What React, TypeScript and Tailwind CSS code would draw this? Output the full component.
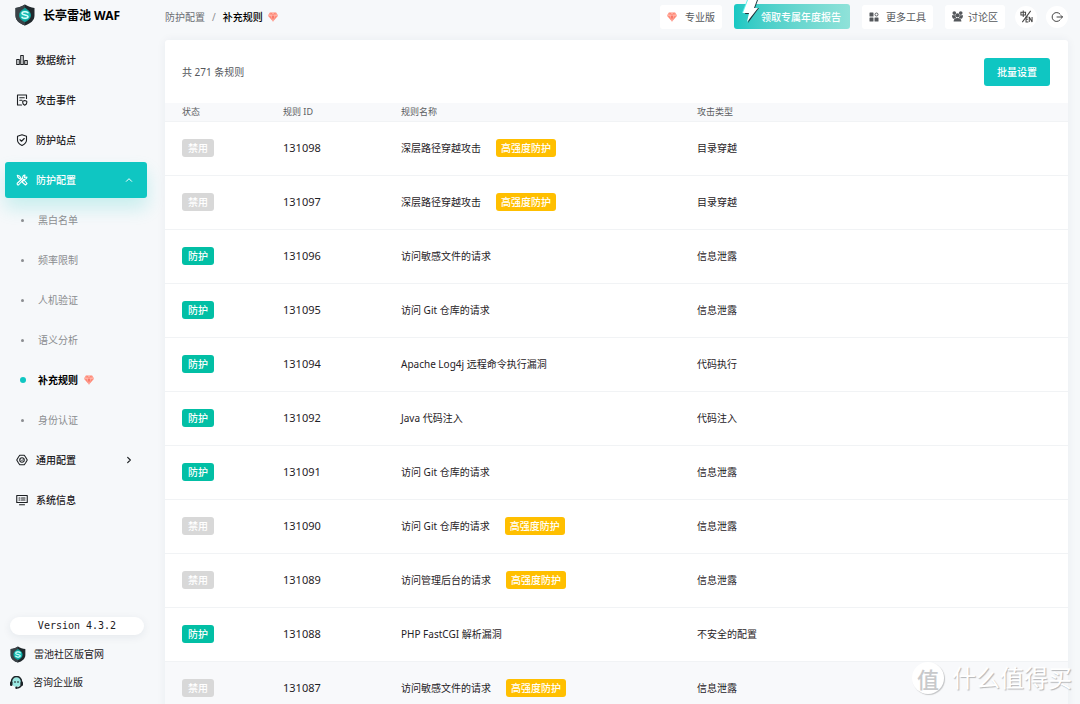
import React from "react";

type IconProps = { className?: string };

function ShieldLogo({ className }: IconProps) {
  return (
    <svg viewBox="0 0 40 44" className={className} aria-hidden="true">
      <path d="M20 1C14 5 8 7 1 8v15c0 10 8 16 19 20 11-4 19-10 19-20V8C32 7 26 5 20 1z" fill="#20282c" />
      <path d="M20 1v42C9 39 1 33 1 23V8c7-1 13-3 19-7z" fill="#3a4247" />
      <path d="M20 7c-1 3-11 5-12 15 0 7 5 11 12 14 7-3 12-7 12-14C31 12 21 10 20 7z" fill="#0f9f99" />
      <circle cx="20" cy="22" r="10" fill="#18bdb5" />
      <path
        d="M26 17.500c-3-3.500-12-2.500-12 1 0 4.500 12 2.500 12 7 0 3.500-9 4.500-12 1"
        fill="none"
        stroke="#d8fffb"
        strokeWidth="3"
        strokeLinecap="round"
      />
    </svg>
  );
}

function Diamond({ className }: IconProps) {
  return (
    <svg viewBox="0 0 20 20" className={className} aria-hidden="true">
      <path d="M4 1h12l4 6.500L10 19 0 7.500z" fill="#ff8673" />
      <path d="M4 1 6.500 7.500H0zM16 1l-2.500 6.500H20z" fill="#ffa596" />
      <path d="M6.500 7.500h7L10 19z" fill="#f76c5c" />
      <path d="M0 7.500h20M6.500 7.500 10 1l3.500 6.500L10 19z" fill="none" stroke="#ffd3cb" strokeWidth="1" />
    </svg>
  );
}

function StrokeIcon({ className, children }: { className?: string; children: React.ReactNode }) {
  return (
    <svg
      viewBox="0 0 24 24"
      className={className}
      fill="none"
      stroke="currentColor"
      strokeWidth="2.200"
      strokeLinecap="round"
      strokeLinejoin="round"
      aria-hidden="true"
    >
      {children}
    </svg>
  );
}

const navIcon = "size-3 shrink-0";

const ChartIcon = () => (
  <StrokeIcon className={navIcon}>
    <path d="M1.500 11h5v10h-5zM9.500 3h5v18h-5zM17.500 13h5v8h-5z" />
  </StrokeIcon>
);

const EventIcon = () => (
  <StrokeIcon className={navIcon}>
    <path d="M21 9V2H3v20h8M7.500 7.500h9M7.500 12.500H12" />
    <path d="M13.500 14.500l4-1.500 4 1.500v3c0 2.500-2 4-4 5-2-1-4-2.500-4-5z" />
  </StrokeIcon>
);

const SiteIcon = () => (
  <StrokeIcon className={navIcon}>
    <path d="M12 1.500 21 4.500v8c0 5-4 8-9 10.500-5-2.500-9-5.500-9-10.500v-8z" />
    <path d="m8 11.500 3 3 5.500-5.500" />
  </StrokeIcon>
);

const ToolsIcon = () => (
  <StrokeIcon className={navIcon}>
    <path d="M2.500 2.500 7 4l3.500 5M2.500 2.500 4 7l5 3.500M14 14l2-2 6 7-3 3-7-6z" />
    <path d="M22 6a5 5 0 0 1-6.500 4.500L5.500 21.500a2.200 2.200 0 0 1-3-3L13.500 8.500A5 5 0 0 1 18 2l-1 5z" />
  </StrokeIcon>
);

const SettingIcon = () => (
  <StrokeIcon className={navIcon}>
    <path d="M7.500 2.500h9L19 6l3.500 6-3.500 6-2.500 3.500h-9L5 18l-3.500-6L5 6z" />
    <circle cx="12" cy="12" r="4.500" />
    <path d="m10.500 12 1.500 1.500 2-2.500" strokeWidth="1.500" />
  </StrokeIcon>
);

const MonitorIcon = () => (
  <StrokeIcon className={navIcon}>
    <path d="M1.500 3h21v14h-21zM7 21.500h10" />
    <path d="M6 8h2M6 12h2M11 8h7M11 12h7" />
  </StrokeIcon>
);

const GridIcon = () => (
  <svg viewBox="0 0 20 20" className="size-[10px]" fill="currentColor" aria-hidden="true">
    <rect x="1" y="1" width="8" height="8" rx="1" />
    <rect x="1" y="11" width="8" height="8" rx="1" />
    <rect x="11" y="11" width="8" height="8" rx="1" />
    <rect x="12" y="2" width="6" height="6" rx="3" fill="none" stroke="currentColor" strokeWidth="2" />
  </svg>
);

const GroupIcon = () => (
  <svg viewBox="0 0 24 24" className="size-[11px]" fill="currentColor" aria-hidden="true">
    <circle cx="5" cy="4.500" r="4" />
    <circle cx="19" cy="4.500" r="4" />
    <circle cx="12" cy="9.500" r="4.500" />
    <path d="M0 9h7l2 6-5 2c-3-1-4-4-4-8zM24 9h-7l-2 6 5 2c3-1 4-4 4-8z" />
    <path d="M3.500 23c0-5 3-7.500 8.500-7.500s8.500 2.500 8.500 7.500z" />
  </svg>
);

const LanguageIcon = () => (
  <svg viewBox="0 0 28 28" className="size-[13px]" aria-hidden="true">
    <g fill="none" stroke="#444" strokeWidth="2.200">
      <path d="M2 5h10v6H2zM7 1v14M23 2 5 26" />
      <path d="M18 15h-5v11h5M13 20h4M20 26V15l6 11V15" />
    </g>
  </svg>
);

const ExitIcon = () => (
  <StrokeIcon className="size-3">
    <path d="M18 6a9 9 0 1 0 0 12M12 12h11M20 9l3 3-3 3" strokeWidth="2" />
  </StrokeIcon>
);

const SupportIcon = () => (
  <svg viewBox="0 0 26 26" className="size-[13px]" aria-hidden="true">
    <circle cx="13" cy="12" r="10" fill="#9be8e2" />
    <path d="M3 14V11a10 10 0 0 1 20 0v5c0 4-3 7-8 8" fill="none" stroke="#1c2327" strokeWidth="3" />
    <rect x="0" y="11" width="5" height="9" rx="2.500" fill="#1c2327" />
    <rect x="21" y="11" width="5" height="9" rx="2.500" fill="#1c2327" />
    <path d="M10 10v4M16 10v4" stroke="#1c2327" strokeWidth="2" />
    <circle cx="13" cy="23.500" r="2.500" fill="#1c2327" />
  </svg>
);

const Bolt = () => (
  <svg viewBox="0 0 18 24" className="absolute -top-1 left-2 h-6 w-[18px]" aria-hidden="true">
    <path d="M7 0h9l-3 8h4L6 23l2-9H3z" fill="#20333a" />
    <path d="M5 0h2L2 13H0z" fill="#5ff3f0" />
    <path d="M6 0h9l-3 8h4L5 22l2-9H1z" fill="#fff" />
  </svg>
);

const subItems = ["黑白名单", "频率限制", "人机验证", "语义分析", "补充规则", "身份认证"];

type Rule = { id: string; name: string; type: string; on: boolean; strict?: boolean };

const rules: Rule[] = [
  { id: "131098", name: "深层路径穿越攻击", type: "目录穿越", on: false, strict: true },
  { id: "131097", name: "深层路径穿越攻击", type: "目录穿越", on: false, strict: true },
  { id: "131096", name: "访问敏感文件的请求", type: "信息泄露", on: true },
  { id: "131095", name: "访问 Git 仓库的请求", type: "信息泄露", on: true },
  { id: "131094", name: "Apache Log4j 远程命令执行漏洞", type: "代码执行", on: true },
  { id: "131092", name: "Java 代码注入", type: "代码注入", on: true },
  { id: "131091", name: "访问 Git 仓库的请求", type: "信息泄露", on: true },
  { id: "131090", name: "访问 Git 仓库的请求", type: "信息泄露", on: false, strict: true },
  { id: "131089", name: "访问管理后台的请求", type: "信息泄露", on: false, strict: true },
  { id: "131088", name: "PHP FastCGI 解析漏洞", type: "不安全的配置", on: true },
  { id: "131087", name: "访问敏感文件的请求", type: "信息泄露", on: false, strict: true },
];

function NavLink({ icon, label }: { icon: React.ReactNode; label: string }) {
  return (
    <a href="#" className="flex h-9 items-center gap-2 rounded-[3px] px-[11px]">
      {icon}
      {label}
    </a>
  );
}

function Sidebar() {
  return (
    <aside className="flex w-[152px] shrink-0 flex-col pl-[5px] pr-[5px] text-[#1d2023]">
      <div className="flex h-[42px] shrink-0 items-start gap-2 pl-[10px] pt-1 text-[12px] font-bold leading-6 text-black">
        <ShieldLogo className="h-[22px] w-5" />
        长亭雷池 WAF
      </div>
      <nav className="flex flex-col gap-1 font-medium">
        <NavLink icon={<ChartIcon />} label="数据统计" />
        <NavLink icon={<EventIcon />} label="攻击事件" />
        <NavLink icon={<SiteIcon />} label="防护站点" />
        <button
          type="button"
          aria-expanded="true"
          className="flex h-9 items-center gap-2 rounded-[3px] bg-[#0fc6c2] px-[11px] text-white shadow-[0_10px_18px_rgba(15,198,194,0.2)]"
        >
          <ToolsIcon />
          防护配置
          <StrokeIcon className="ml-auto mr-[3px] size-2">
            <path d="m4 16 8-8 8 8" strokeWidth="3" />
          </StrokeIcon>
        </button>
        {subItems.map((label) => {
          const current = label === "补充规则";
          return (
            <a
              key={label}
              href="#"
              className={
                current
                  ? "flex h-9 items-center pl-[15px] font-bold text-black"
                  : "flex h-9 items-center pl-[15px] font-normal text-[#8b8d90]"
              }
            >
              <span className="flex w-[18px] items-center">
                <span
                  className={
                    current ? "size-[6px] rounded-full bg-[#0fc6c2]" : "ml-px size-[3px] rounded-full bg-[#8b8d90]"
                  }
                />
              </span>
              {label}
              {current && <Diamond className="ml-[6px] size-[10px]" />}
            </a>
          );
        })}
        <button type="button" aria-expanded="false" className="flex h-9 items-center gap-2 px-[11px]">
          <SettingIcon />
          通用配置
          <StrokeIcon className="ml-auto mr-[3px] size-2">
            <path d="m8 4 8 8-8 8" strokeWidth="3.500" />
          </StrokeIcon>
        </button>
        <NavLink icon={<MonitorIcon />} label="系统信息" />
      </nav>
      <div className="mt-auto flex flex-col pb-2 pl-[5px] pr-[3px]">
        <p className="mb-[5px] h-[18px] rounded-full bg-white text-center font-['DejaVu_Sans_Mono',monospace] leading-[18px] shadow-[0_2px_8px_rgba(30,50,80,0.08)]">
          Version 4.3.2
        </p>
        <a href="#" className="flex h-7 items-center gap-2">
          <ShieldLogo className="h-[17px] w-4" />
          雷池社区版官网
        </a>
        <a href="#" className="flex h-7 items-center gap-[10px]">
          <SupportIcon />
          咨询企业版
        </a>
      </div>
    </aside>
  );
}

function Topbar() {
  const chip = "flex h-6 items-center rounded-[3px] bg-white px-[7px] text-[#55585c]";
  const round = "flex size-[22px] items-center justify-center rounded-full bg-white text-[#444]";
  return (
    <header className="flex h-10 shrink-0 items-start justify-between pt-1">
      <nav aria-label="breadcrumb" className="flex h-[26px] items-center">
        <a href="#" className="text-[#6b6e72]">防护配置</a>
        <span className="px-[7px] text-[#8b8d90]">/</span>
        <span className="font-medium text-black">补充规则</span>
        <Diamond className="ml-[5px] size-[10px]" />
      </nav>
      <div className="flex items-center gap-[10px]">
        <div className="flex items-center gap-3">
          <button type="button" className={chip}>
            <span className="mr-2"><Diamond className="size-[10px]" /></span>
            专业版
          </button>
          <button
            type="button"
            className="relative h-[25px] rounded-[3px] bg-linear-to-r from-[#15c8c3] to-[#8fe2d9] pl-[27px] pr-[9px] font-medium text-white"
          >
            <Bolt />
            领取专属年度报告
          </button>
          <button type="button" className={chip}>
            <span className="mr-[7px]"><GridIcon /></span>
            更多工具
          </button>
          <button type="button" className={chip}>
            <span className="mr-[5px]"><GroupIcon /></span>
            讨论区
          </button>
        </div>
        <div className="flex gap-[9px]">
          <button type="button" aria-label="语言" className={round}><LanguageIcon /></button>
          <button type="button" aria-label="退出" className={round}><ExitIcon /></button>
        </div>
      </div>
    </header>
  );
}

function RuleTable() {
  const head = "h-[18px] px-[17px] text-left text-[9px] font-normal leading-none text-[#5c5f63]";
  return (
    <table className="w-full table-fixed border-collapse">
      <colgroup>
        <col className="w-[101px]" />
        <col className="w-[118px]" />
        <col className="w-[296px]" />
        <col />
      </colgroup>
      <thead className="bg-[#f8f9fb]">
        <tr className="border-b border-[#f1f3f5]">
          <th className={head}>状态</th>
          <th className={head}>规则 ID</th>
          <th className={head}>规则名称</th>
          <th className={head}>攻击类型</th>
        </tr>
      </thead>
      <tbody>
        {rules.map((r) => (
          <tr key={r.id} className="h-[54px] border-b border-[#f1f3f5] last:bg-[#f8f9fb]">
            <td className="px-[17px]">
              <span
                className={
                  r.on
                    ? "block h-[18px] w-8 rounded-[3px] bg-[#02bfa5] text-center font-medium leading-[18px] text-white"
                    : "block h-[18px] w-8 rounded-[3px] bg-[#d8d8d8] text-center font-medium leading-[18px] text-white"
                }
              >
                {r.on ? "防护" : "禁用"}
              </span>
            </td>
            <td className="px-[17px] text-[11px]">{r.id}</td>
            <td className="px-[17px]">
              <div className="flex items-center gap-[15px]">
                {r.name}
                {r.strict && (
                  <span className="h-[18px] rounded-[3px] bg-[#ffbf00] px-[5px] font-medium leading-[18px] text-white">
                    高强度防护
                  </span>
                )}
              </div>
            </td>
            <td className="px-[17px]">{r.type}</td>
          </tr>
        ))}
      </tbody>
    </table>
  );
}

export default function App() {
  return (
    <div className="relative flex h-screen overflow-hidden bg-[#f6f8fa] font-['Noto_Sans','Noto_Sans_CJK_SC',sans-serif] text-[10px] leading-4 text-[#1f2226]">
      <Sidebar />
      <main className="flex min-w-0 flex-1 flex-col pl-[13px] pr-3">
        <Topbar />
        <section className="rounded-[3px] bg-white shadow-[0_0_10px_rgba(30,50,80,0.06)]">
          <div className="flex h-[63px] items-center justify-between pl-[17px] pr-[18px]">
            <p className="text-[#55585c]">共 271 条规则</p>
            <button type="button" className="h-7 rounded-[3px] bg-[#0fc6c2] px-[13px] font-medium text-white">
              批量设置
            </button>
          </div>
          <RuleTable />
        </section>
      </main>
      <div className="pointer-events-none absolute bottom-2 right-2 flex items-center gap-2 text-white">
        <span className="flex size-8 items-center justify-center rounded-full bg-white font-['Noto_Sans_CJK_SC',sans-serif] text-[22px] font-medium leading-none text-[#c8c9cb] shadow-[1px_1px_1px_#c4c5c7]">
          值
        </span>
        <span className="text-[24px] leading-9 [text-shadow:1px_1px_1px_#b4b5b7]">什么值得买</span>
      </div>
    </div>
  );
}
